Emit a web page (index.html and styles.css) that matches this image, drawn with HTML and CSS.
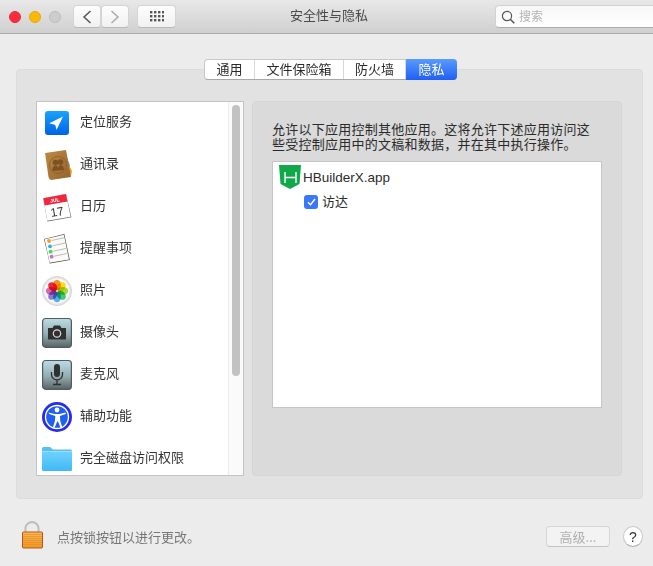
FILE: index.html
```html
<!DOCTYPE html>
<html lang="zh">
<head>
<meta charset="utf-8">
<title>安全性与隐私</title>
<link rel="stylesheet" href="styles.css">
</head>
<body>
<div class="window">
  <header class="titlebar">
    <div class="lights">
      <span class="light red"></span>
      <span class="light yellow"></span>
      <span class="light gray"></span>
    </div>
    <div class="nav">
      <button class="tbtn nav-btn"><svg width="10" height="14" viewBox="0 0 10 14"><path d="M8.500 1 2 7l6.500 6" fill="none" stroke="#555" stroke-width="1.500"/></svg></button>
      <button class="tbtn nav-btn"><svg width="10" height="14" viewBox="0 0 10 14"><path d="M1.500 1 8 7l-6.500 6" fill="none" stroke="#aaa" stroke-width="1.500"/></svg></button>
    </div>
    <button class="tbtn grid-btn"><svg width="14" height="11" viewBox="0 0 14 11" fill="#555"><rect x="0" y="0" width="2.400" height="2.400"/><rect x="4" y="0" width="2.400" height="2.400"/><rect x="8" y="0" width="2.400" height="2.400"/><rect x="12" y="0" width="2.400" height="2.400"/><rect x="0" y="4" width="2.400" height="2.400"/><rect x="4" y="4" width="2.400" height="2.400"/><rect x="8" y="4" width="2.400" height="2.400"/><rect x="12" y="4" width="2.400" height="2.400"/><rect x="0" y="8" width="2.400" height="2.400"/><rect x="4" y="8" width="2.400" height="2.400"/><rect x="8" y="8" width="2.400" height="2.400"/><rect x="12" y="8" width="2.400" height="2.400"/></svg></button>
    <div class="title">安全性与隐私</div>
    <div class="search">
      <svg width="14" height="14" viewBox="0 0 14 14"><circle cx="6" cy="6" r="4.600" fill="none" stroke="#555" stroke-width="1.200"/><path d="m9.300 9.300 4 4" stroke="#555" stroke-width="1.500"/></svg>
      <span class="search-label">搜索</span>
    </div>
  </header>

  <main class="content">
    <section class="group">
      <nav class="tabs">
        <span class="tab">通用</span>
        <span class="tab">文件保险箱</span>
        <span class="tab">防火墙</span>
        <span class="tab active">隐私</span>
      </nav>
      <div class="panes">
        <div class="list">
          <ul class="items">
            <li class="item"><svg class="icon" viewBox="0 0 32 32"><defs><linearGradient id="loc" x1="0" y1="0" x2="0" y2="1"><stop offset="0" stop-color="#19a4fb"/><stop offset="1" stop-color="#0062e6"/></linearGradient></defs><rect x="3" y="4" width="24" height="24" rx="3" fill="url(#loc)"/><path d="M21 9.500 7.300 16.300 13.300 18 14.500 23z" fill="#fff"/></svg><span class="label">定位服务</span></li>
            <li class="item"><svg class="icon" viewBox="0 0 32 32"><defs><linearGradient id="book" x1="0" y1="0" x2="1" y2="1"><stop offset="0" stop-color="#bf8a46"/><stop offset="1" stop-color="#94632c"/></linearGradient></defs><path d="m24 6 4 10-1 6-2-3z" fill="#48b0d8"/><path d="m26 14 4 8-1 5-2-4z" fill="#f0a020"/><path d="M3 4 24 1l5 27-20 3q-2-.5-2.500-3z" fill="url(#book)"/><circle cx="16" cy="16" r="8.500" fill="none" stroke="#8a5d2a" stroke-width=".8"/><circle cx="13.500" cy="13.500" r="2.800" fill="#7d5222"/><circle cx="18.500" cy="13" r="2.800" fill="#7d5222"/><path d="M10.500 22q-.5-5 3-5.500 3 .5 3 5zM16 21.500q-.3-5 2.700-5.500 3 .5 3.300 5z" fill="#7d5222"/></svg><span class="label">通讯录</span></li>
            <li class="item"><svg class="icon" viewBox="0 0 32 32"><path d="M1.300 7.300 24 3l5.400 23.300-24 4.200z" fill="#5a5f66"/><path d="M1.300 7.300 24 3l4.700 22.700-23.400 4z" fill="#fff"/><path d="M1.300 7.300 24 3l1.400 7.500L2.700 14.500z" fill="#f0283c"/><text x="13" y="11" class="cal-m" transform="rotate(-10 13 10)">JUL</text><text x="15" y="25" class="cal-d" transform="rotate(-10 15 20)">17</text></svg><span class="label">日历</span></li>
            <li class="item"><svg class="icon" viewBox="0 0 32 32"><path d="M2 6 22.300 1l5.500 26-20 3.400z" fill="#444"/><path d="M2.600 6.300 21.900 1.700 27 26.500 7.700 29.700z" fill="#fbfbf6"/><path d="m9.500 7.500 12.500-2.700M10.500 12.800l12.500-2.700M11.200 18.200l12.700-2.700M12.200 23.200l12.700-2.700" stroke="#aaa" stroke-width=".8"/><circle cx="7" cy="8" r="1.900" fill="#f79a2a"/><circle cx="8" cy="13.300" r="1.900" fill="#2aaef0"/><circle cx="8.700" cy="18.700" r="1.900" fill="#3fdc4c"/><circle cx="9.700" cy="23.700" r="1.900" fill="#c86ad8"/></svg><span class="label">提醒事项</span></li>
            <li class="item"><svg class="icon" viewBox="0 0 32 32"><circle cx="15" cy="16" r="14.600" fill="#e4e4e4" stroke="#cfcfcf" stroke-width=".8"/><circle cx="15" cy="16" r="12.500" fill="#fafafa"/><g class="petals"><ellipse class="petal" cx="15" cy="10" rx="3.900" ry="5.200" fill="#f59322"/><ellipse class="petal" cx="15" cy="10" rx="3.900" ry="5.200" fill="#fddc10" transform="rotate(45 15 16)"/><ellipse class="petal" cx="15" cy="10" rx="3.900" ry="5.200" fill="#a5d832" transform="rotate(90 15 16)"/><ellipse class="petal" cx="15" cy="10" rx="3.900" ry="5.200" fill="#3ecb7e" transform="rotate(135 15 16)"/><ellipse class="petal" cx="15" cy="10" rx="3.900" ry="5.200" fill="#50b0ea" transform="rotate(180 15 16)"/><ellipse class="petal" cx="15" cy="10" rx="3.900" ry="5.200" fill="#9078d0" transform="rotate(225 15 16)"/><ellipse class="petal" cx="15" cy="10" rx="3.900" ry="5.200" fill="#d766ae" transform="rotate(270 15 16)"/><ellipse class="petal" cx="15" cy="10" rx="3.900" ry="5.200" fill="#ee2a3a" transform="rotate(315 15 16)"/></g></svg><span class="label">照片</span></li>
            <li class="item"><svg class="icon" viewBox="0 0 32 32"><defs><linearGradient id="tile" x1="0" y1="0" x2="0" y2="1"><stop offset="0" stop-color="#bcdde4"/><stop offset=".55" stop-color="#93adb2"/><stop offset="1" stop-color="#5b6363"/></linearGradient></defs><rect x=".6" y="1.500" width="28.800" height="28.800" rx="3" fill="url(#tile)" stroke="#4f5a63" stroke-width="1.200"/><path d="M6 11h4.500L12 8.500h6l1.500 2.500H24v11.500H6z" fill="#303030"/><circle cx="15" cy="16.500" r="3.700" fill="none" stroke="#dcdcdc" stroke-width="1.200"/></svg><span class="label">摄像头</span></li>
            <li class="item"><svg class="icon" viewBox="0 0 32 32"><rect x=".6" y="1.500" width="28.800" height="28.800" rx="3" fill="url(#tile)" stroke="#4f5a63" stroke-width="1.200"/><rect x="12" y="5" width="6" height="13" rx="3" fill="#303030"/><path d="M9.500 13v2.500a5.500 5.500 0 0 0 11 0V13M15 21v4M11 25.500h8" fill="none" stroke="#303030" stroke-width="1.300"/></svg><span class="label">麦克风</span></li>
            <li class="item"><svg class="icon" viewBox="0 0 32 32"><circle cx="15" cy="16" r="15" fill="#2a2aec"/><circle cx="15" cy="16" r="11.500" fill="#1d60f2" stroke="#fff" stroke-width="1.400"/><circle cx="15" cy="9" r="2.400" fill="#fff"/><path d="m6.500 11.500 6 1.500h5l6-1.500.4 1.600-6 1.900.4 5 2 6.500-1.600.5-2.700-6.500h-.8l-2.700 6.500-1.600-.5 2-6.500.4-5-6-1.900z" fill="#fff"/></svg><span class="label">辅助功能</span></li>
            <li class="item"><svg class="icon" viewBox="0 0 32 32"><defs><linearGradient id="fold" x1="0" y1="0" x2="0" y2="1"><stop offset="0" stop-color="#6fd2fc"/><stop offset="1" stop-color="#3fb9f4"/></linearGradient></defs><path d="M0 5.500Q0 4 1.500 4H8l3 2.500h17.500Q30 6.500 30 8v4H0z" fill="#58bff2"/><path d="M0 8.500h30V26.500q0 1.500-1.500 1.500h-27Q0 28 0 26.500z" fill="url(#fold)"/><path d="M0 8.500h30" stroke="#a8e2fc" stroke-width=".8"/></svg><span class="label">完全磁盘访问权限</span></li>
          </ul>
          <div class="scroll"><div class="thumb"></div></div>
        </div>
        <div class="detail">
          <p class="desc">允许以下应用控制其他应用。这将允许下述应用访问这些受控制应用中的文稿和数据，并在其中执行操作。</p>
          <div class="apps">
            <div class="app">
              <svg class="hb" width="22" height="24" viewBox="0 0 22 24"><path d="M0 0h22l-1.500 19L11 24l-9.500-5z" fill="#10a84a"/><path d="M6 7v11M17 7v11M6 12.500h11" fill="none" stroke="#fff" stroke-width="1.400"/></svg>
              <span>HBuilderX.app</span>
            </div>
            <div class="sub">
              <span class="check"><svg width="9" height="8" viewBox="0 0 9 8"><path d="m1 4.200 2.500 2.500L8 1" fill="none" stroke="#fff" stroke-width="1.400"/></svg></span>
              <span class="label-sm">访达</span>
            </div>
          </div>
        </div>
      </div>
    </section>
    <footer class="foot">
      <svg class="lock" width="24" height="28" viewBox="0 0 24 28"><defs><linearGradient id="lk" x1="0" y1="0" x2="0" y2="1"><stop offset="0" stop-color="#fdbb50"/><stop offset="1" stop-color="#f29420"/></linearGradient></defs><path d="M4.500 11V7.500a6.500 6.500 0 0 1 13 0V11" fill="none" stroke="#b9bec4" stroke-width="2"/><rect x="1.500" y="11" width="20" height="16" rx="1" fill="url(#lk)" stroke="#b3561a"/><path d="M2 13.500h19M2 15.500h19M2 17.500h19M2 19.500h19M2 21.500h19M2 23.500h19" stroke="#d98a30" stroke-width=".6"/></svg>
      <span class="hint">点按锁按钮以进行更改。</span>
      <button class="adv">高级...</button>
      <button class="help">?</button>
    </footer>
  </main>
</div>
</body>
</html>
```
FILE: styles.css
```css
* { box-sizing: border-box; }
html, body { margin: 0; padding: 0; }
body {
  width: 653px;
  height: 566px;
  overflow: hidden;
  background: #ececec;
  font-family: "Noto Sans CJK SC", "Liberation Sans", sans-serif;
  font-size: 13px;
  color: #2c2c2c;
}
button { font-family: inherit; padding: 0; }
.window { display: flex; flex-direction: column; height: 566px; }

.titlebar {
  height: 34px;
  flex: none;
  display: flex;
  align-items: center;
  padding: 0 0 0 9px;
  background: linear-gradient(#e8e8e8, #d0d0d0);
  border-bottom: 1px solid #ababab;
  position: relative;
}
.lights { display: flex; gap: 8px; }
.light { width: 12px; height: 12px; border-radius: 50%; }
.red { background: #fb2c3e; border: 1px solid #e4283a; }
.yellow { background: #fdb900; border: 1px solid #e6a814; }
.gray { background: #cdcdcd; border: 1px solid #bdbdbd; }
.nav { display: flex; margin-left: 12px; }
.tbtn {
  height: 23px;
  display: flex;
  align-items: center;
  justify-content: center;
  background: linear-gradient(#fdfdfd, #f1f1f1);
  border: 1px solid #d4d4d4;
  border-bottom-color: #b9b9b9;
  border-radius: 4px;
}
.nav-btn { width: 28px; }
.grid-btn { width: 39px; margin-left: 8px; }
.title {
  position: absolute;
  left: 5px;
  right: 0;
  top: 5px;
  text-align: center;
  font-size: 13px;
  line-height: 19px;
  color: #4a4a4a;
}
.search {
  margin-left: auto;
  position: relative;
  right: -1px;
  width: 159px;
  height: 23px;
  display: flex;
  align-items: center;
  gap: 4px;
  padding-left: 5px;
  background: linear-gradient(#f7f7f7, #fff);
  border: 1px solid #d2d2d2;
  border-bottom-color: #acacac;
  border-radius: 4px 0 0 4px;
  color: #b4b4b4;
  font-size: 12px;
}
.search-label { padding-bottom: 3px; }

.content { flex: 1; display: flex; flex-direction: column; padding: 35px 10px 0 16px; }
.group {
  height: 430px;
  background: #e2e2e2;
  border: 1px solid #dcdcdc;
  border-radius: 4px;
  position: relative;
  padding: 31px 20px 0 19px;
}
.tabs {
  position: absolute;
  top: -11px;
  left: 187px;
  display: flex;
  height: 21px;
  background: #fff;
  border: 1px solid #c8c8c8;
  border-bottom-color: #a8a8a8;
  border-radius: 4px;
  font-size: 13px;
  line-height: 17px;
}
.tab { width: 50px; text-align: center; border-right: 1px solid #d8d8d8; color: #2a2a2a; }
.tab:nth-child(2) { width: 89px; }
.tab:nth-child(3) { width: 62px; }
.tab.active {
  border: 0;
  margin: -1px -1px -1px 0;
  padding-top: 1px;
  width: 51px;
  height: 21px;
  color: #fff;
  background: linear-gradient(#5a9bfb, #1f5ff5);
  border-radius: 0 4px 4px 0;
}
.panes { display: flex; gap: 8px; height: 375px; }

.list {
  width: 208px;
  background: #fff;
  border: 1px solid #c4c4c4;
  display: flex;
  overflow: hidden;
}
.items { list-style: none; margin: 0; padding: 0; flex: 1; min-width: 0; }
.item {
  height: 42px;
  display: flex;
  align-items: center;
  gap: 6px;
  padding-left: 5px;
  font-size: 13px;
  color: #333;
}
.label { padding-bottom: 6px; }
.icon { width: 32px; height: 32px; flex: none; }
.petals { isolation: isolate; }
.petal { mix-blend-mode: multiply; }
.cal-m { font: bold 5px "Liberation Sans", sans-serif; fill: #fff; text-anchor: middle; }
.cal-d { font: 12px "Liberation Sans", sans-serif; fill: #333; text-anchor: middle; }
.scroll { width: 15px; flex: none; border-left: 1px solid #ebebeb; padding: 3px 0 0 3px; background: #fafafa; }
.thumb { width: 8px; height: 271px; background: #c2c2c2; border-radius: 4px; }

.detail {
  flex: 1;
  background: #dadada;
  border: 1px solid #d5d5d5;
  border-radius: 4px;
  padding: 19px 19px 0;
}
.desc { margin: 0; font-size: 13px; letter-spacing: .25px; line-height: 15px; color: #2a2a2a; height: 40px; width: 325px; }
.apps { width: 330px; height: 247px; background: #fff; border: 1px solid #c6c6c6; padding-top: 2px; }
.app { display: flex; align-items: center; gap: 2px; height: 26px; padding-left: 6px; font-family: "Liberation Sans", "Noto Sans CJK SC", sans-serif; font-size: 13.5px; }
.sub { display: flex; align-items: center; gap: 4px; height: 24px; padding-left: 31px; font-size: 13px; }
.label-sm { padding-bottom: 3px; }
.check { width: 14px; height: 14px; background: #3a78f5; border-radius: 3px; display: flex; align-items: center; justify-content: center; }

.foot { display: flex; align-items: center; height: 66px; padding: 9px 0 0 5px; }
.lock { flex: none; margin-bottom: 4px; }
.hint { margin-left: 12px; font-size: 13px; color: #777; }
.adv {
  margin-left: auto;
  width: 64px;
  height: 21px;
  background: #f3f3f3;
  border: 1px solid #d6d6d6;
  border-bottom-color: #c4c4c4;
  border-radius: 4px;
  color: #b0b0b0;
  font-size: 13px;
}
.help {
  margin-left: 13px;
  width: 20px;
  height: 21px;
  border-radius: 50%;
  background: #fff;
  border: 1px solid #c8c8c8;
  border-bottom-color: #aaa;
  font: 14px "Liberation Sans", sans-serif;
  color: #333;
}
```
